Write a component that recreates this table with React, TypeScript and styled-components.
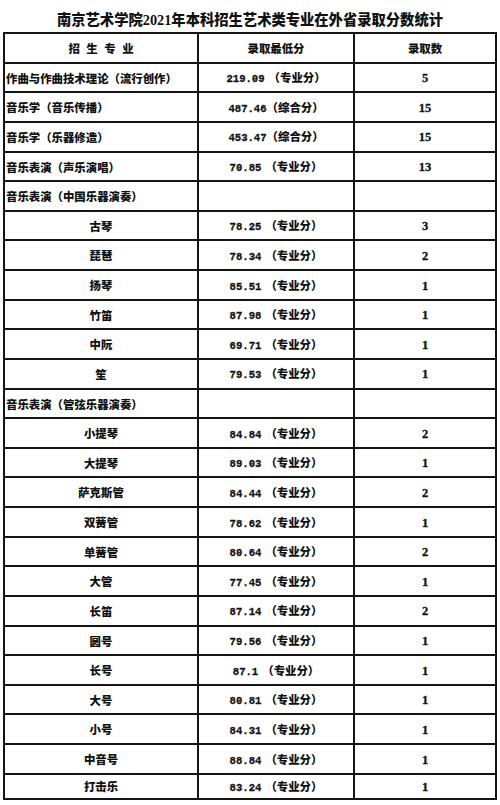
import React from "react";
import styled, { createGlobalStyle } from "styled-components";

// Data

interface ScoreRow {
  name: string;
  score?: string;
  unit?: string;
  gap?: boolean;
  count?: string;
  sub?: boolean;
}

const rows: ScoreRow[] = [
  { name: "作曲与作曲技术理论（流行创作）", score: "219.09", unit: "（专业分）", gap: true, count: "5" },
  { name: "音乐学（音乐传播）", score: "487.46", unit: "（综合分）", count: "15" },
  { name: "音乐学（乐器修造）", score: "453.47", unit: "（综合分）", count: "15" },
  { name: "音乐表演（声乐演唱）", score: "70.85", unit: "（专业分）", gap: true, count: "13" },
  { name: "音乐表演（中国乐器演奏）" },
  { name: "古琴", score: "78.25", count: "3", sub: true },
  { name: "琵琶", score: "78.34", count: "2", sub: true },
  { name: "扬琴", score: "85.51", count: "1", sub: true },
  { name: "竹笛", score: "87.98", count: "1", sub: true },
  { name: "中阮", score: "69.71", count: "1", sub: true },
  { name: "笙", score: "79.53", count: "1", sub: true },
  { name: "音乐表演（管弦乐器演奏）" },
  { name: "小提琴", score: "84.84", count: "2", sub: true },
  { name: "大提琴", score: "89.03", count: "1", sub: true },
  { name: "萨克斯管", score: "84.44", count: "2", sub: true },
  { name: "双簧管", score: "78.62", count: "1", sub: true },
  { name: "单簧管", score: "80.64", count: "2", sub: true },
  { name: "大管", score: "77.45", count: "1", sub: true },
  { name: "长笛", score: "87.14", count: "2", sub: true },
  { name: "圆号", score: "79.56", count: "1", sub: true },
  { name: "长号", score: "87.1", count: "1", sub: true },
  { name: "大号", score: "80.81", count: "1", sub: true },
  { name: "小号", score: "84.31", count: "1", sub: true },
  { name: "中音号", score: "88.84", count: "1", sub: true },
  { name: "打击乐", score: "83.24", count: "1", sub: true },
];

// Styles

const GlobalStyle = createGlobalStyle`
  body {
    margin: 0;
    background: #fff;
    color: #111;
    font-family: "Noto Sans CJK SC", "Liberation Serif", serif;
  }
`;

const Page = styled.div`
  width: 500px;
  height: 805px;
  overflow: hidden;
  background: #fff;
`;

const Title = styled.h1`
  margin: 0;
  height: 32px;
  display: flex;
  align-items: center;
  justify-content: center;
  font-size: 14.3px;
  font-weight: 900;
  font-family: "Liberation Serif", "Noto Sans CJK SC", serif;
  padding-top: 4px;
  box-sizing: border-box;
`;

const Table = styled.table`
  margin-left: 3px;
  width: 492px;
  table-layout: fixed;
  border-collapse: collapse;
  border: 2px solid #141414;
`;

const Row = styled.tr<{ $last?: boolean }>`
  height: ${(p) => (p.$last ? "25px" : "29.64px")};
`;

const Cell = styled.td<{ $left?: boolean }>`
  border: 2px solid #141414;
  padding: 2px 0 0 ${(p) => (p.$left ? "1px" : "0")};
  text-align: ${(p) => (p.$left ? "left" : "center")};
  vertical-align: middle;
  font-size: 11.4px;
  font-weight: 900;
  line-height: 1;
  white-space: nowrap;
`;

const HeadCell = styled(Cell).attrs({ as: "th" })<{ $spaced?: boolean }>`
  letter-spacing: ${(p) => (p.$spaced ? "6.5px" : "0")};
  text-indent: ${(p) => (p.$spaced ? "6.5px" : "0")};
`;

const Score = styled.span`
  font-family: "Liberation Mono", monospace;
  font-size: 10.6px;
  font-weight: 700;
  -webkit-text-stroke: 0.3px #111;
`;

const Unit = styled.span<{ $gap?: boolean }>`
  margin-left: ${(p) => (p.$gap ? "4px" : "0")};
`;

const Count = styled.span`
  font-family: "Liberation Serif", serif;
  font-size: 12.5px;
  font-weight: 700;
  -webkit-text-stroke: 0.3px #111;
`;

// Component

const App: React.FC = () => {
  return (
    <Page>
      <GlobalStyle />
      <Title>南京艺术学院2021年本科招生艺术类专业在外省录取分数统计</Title>
      <Table>
        <colgroup>
          <col style={{ width: 194 }} />
          <col style={{ width: 156 }} />
          <col style={{ width: 142 }} />
        </colgroup>
        <thead>
          <Row>
            <HeadCell $spaced>招生专业</HeadCell>
            <HeadCell>录取最低分</HeadCell>
            <HeadCell>录取数</HeadCell>
          </Row>
        </thead>
        <tbody>
          {rows.map((row, i) => (
            <Row key={row.name} $last={i === rows.length - 1}>
              <Cell $left={!row.sub}>{row.name}</Cell>
              <Cell>
                {row.score && (
                  <>
                    <Score>{row.score}</Score>
                    <Unit $gap={row.gap || row.sub}>{row.unit ?? "（专业分）"}</Unit>
                  </>
                )}
              </Cell>
              <Cell>{row.count && <Count>{row.count}</Count>}</Cell>
            </Row>
          ))}
        </tbody>
      </Table>
    </Page>
  );
};

export default App;
